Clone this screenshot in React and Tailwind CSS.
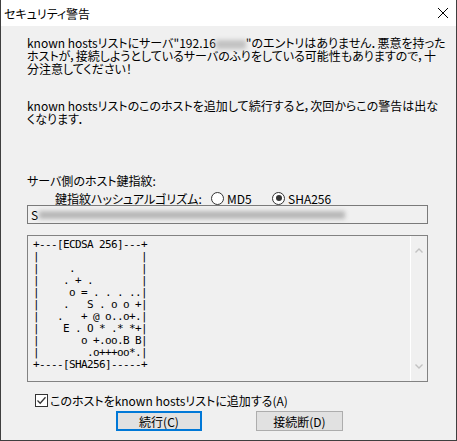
const art = [
  "+---[ECDSA 256]---+",
  "|                 |",
  "|     .           |",
  "|    . + .        |",
  "|     o = . . . ..|",
  "|    .   S . o o +|",
  "|   .   + @ o..o+.|",
  "|    E . O * .* *+|",
  "|       o +.oo.B B|",
  "|        .o+++oo*.|",
  "+----[SHA256]-----+",
];

function Radio({ checked }) {
  return (
    <span className="w-[13px] h-[13px] rounded-full border border-[#333] bg-white flex items-center justify-center shrink-0">
      {checked && <span className="w-[6px] h-[6px] rounded-full bg-[#333]" />}
    </span>
  );
}

export default function App() {
  return (
    <div className="w-[457px] h-[441px] bg-[#f0f0f0] border-x border-b border-[#3f3f3f] flex flex-col text-[12px] leading-[13px] text-black font-['Noto_Sans_CJK_JP',sans-serif] [font-feature-settings:'palt']">
      <div className="h-[26px] bg-white flex items-center justify-between pl-[3px] pr-[7px] shrink-0">
        <span className="text-[12px]">セキュリティ警告</span>
        <svg width="12" height="12" viewBox="0 0 12 12">
          <path d="M1 1 L11 11 M11 1 L1 11" stroke="#000" strokeWidth="1" />
        </svg>
      </div>

      <div className="pl-[26px] flex flex-col">
        <p className="mt-[10px] whitespace-nowrap">
          known hostsリストにサーバ"192.16
          <span className="inline-block w-[30px] h-[9px] bg-[#c2c2c2] blur-[2px] align-middle" />
          "のエントリはありません．悪意を持った
          <br />
          ホストが，接続しようとしているサーバのふりをしている可能性もありますので，十
          <br />
          分注意してください！
        </p>
        <p className="mt-[24px] whitespace-nowrap">
          known hostsリストのこのホストを追加して続行すると，次回からこの警告は出な
          <br />
          くなります．
        </p>

        <p className="mt-[49px]">サーバ側のホスト鍵指紋:</p>
        <div className="mt-[4px] h-[14px] flex items-center pl-[28px]">
          <span className="w-[156px]">鍵指紋ハッシュアルゴリズム:</span>
          <Radio />
          <span className="ml-[3px] w-[45px]">MD5</span>
          <Radio checked />
          <span className="ml-[3px]">SHA256</span>
        </div>

        <div className="w-[401px] h-[19px] border border-[#7a7a7a] flex items-center pl-[3px] overflow-hidden">
          <span>S</span>
          <span className="ml-[1px] w-[306px] h-[8px] bg-[#b8b8b8] blur-[2px]" />
        </div>

        <div className="mt-[11px] w-[401px] h-[147px] border border-[#828282] flex">
          <div className="flex-1 pl-[5px] pt-[3px]">
            <pre className="font-['DejaVu_Sans_Mono',monospace] text-[11px] tracking-[-0.62px] leading-[12px]">
              {art.join("\n")}
            </pre>
          </div>
          <div className="w-[17px] border-l border-white flex flex-col justify-between items-center py-[12px]">
            <svg width="8" height="5" viewBox="0 0 8 5">
              <path d="M0.5 4.5 L4 1 L7.5 4.5" stroke="#c2c2c2" strokeWidth="1.4" fill="none" />
            </svg>
            <svg width="8" height="5" viewBox="0 0 8 5">
              <path d="M0.5 0.5 L4 4 L7.5 0.5" stroke="#c2c2c2" strokeWidth="1.4" fill="none" />
            </svg>
          </div>
        </div>

        <div className="mt-[12px] h-[13px] flex items-center pl-[8px]">
          <span className="w-[13px] h-[13px] border border-[#333] bg-white flex items-center justify-center shrink-0">
            <svg width="11" height="11" viewBox="0 0 11 11">
              <path d="M1.5 5.5 L4.2 8.2 L9.5 2.2" stroke="#333" strokeWidth="1.3" fill="none" />
            </svg>
          </span>
          <span className="ml-[2px]">このホストをknown hostsリストに追加する(A)</span>
        </div>

        <div className="mt-[4px] flex pl-[89px] gap-[54px]">
          <button className="w-[86px] h-[20px] border-2 border-[#0078d7] bg-[#e1e1e1] flex items-center justify-center">
            続行(C)
          </button>
          <button className="w-[87px] h-[20px] border border-[#adadad] bg-[#e1e1e1] flex items-center justify-center">
            接続断(D)
          </button>
        </div>
      </div>
    </div>
  );
}
